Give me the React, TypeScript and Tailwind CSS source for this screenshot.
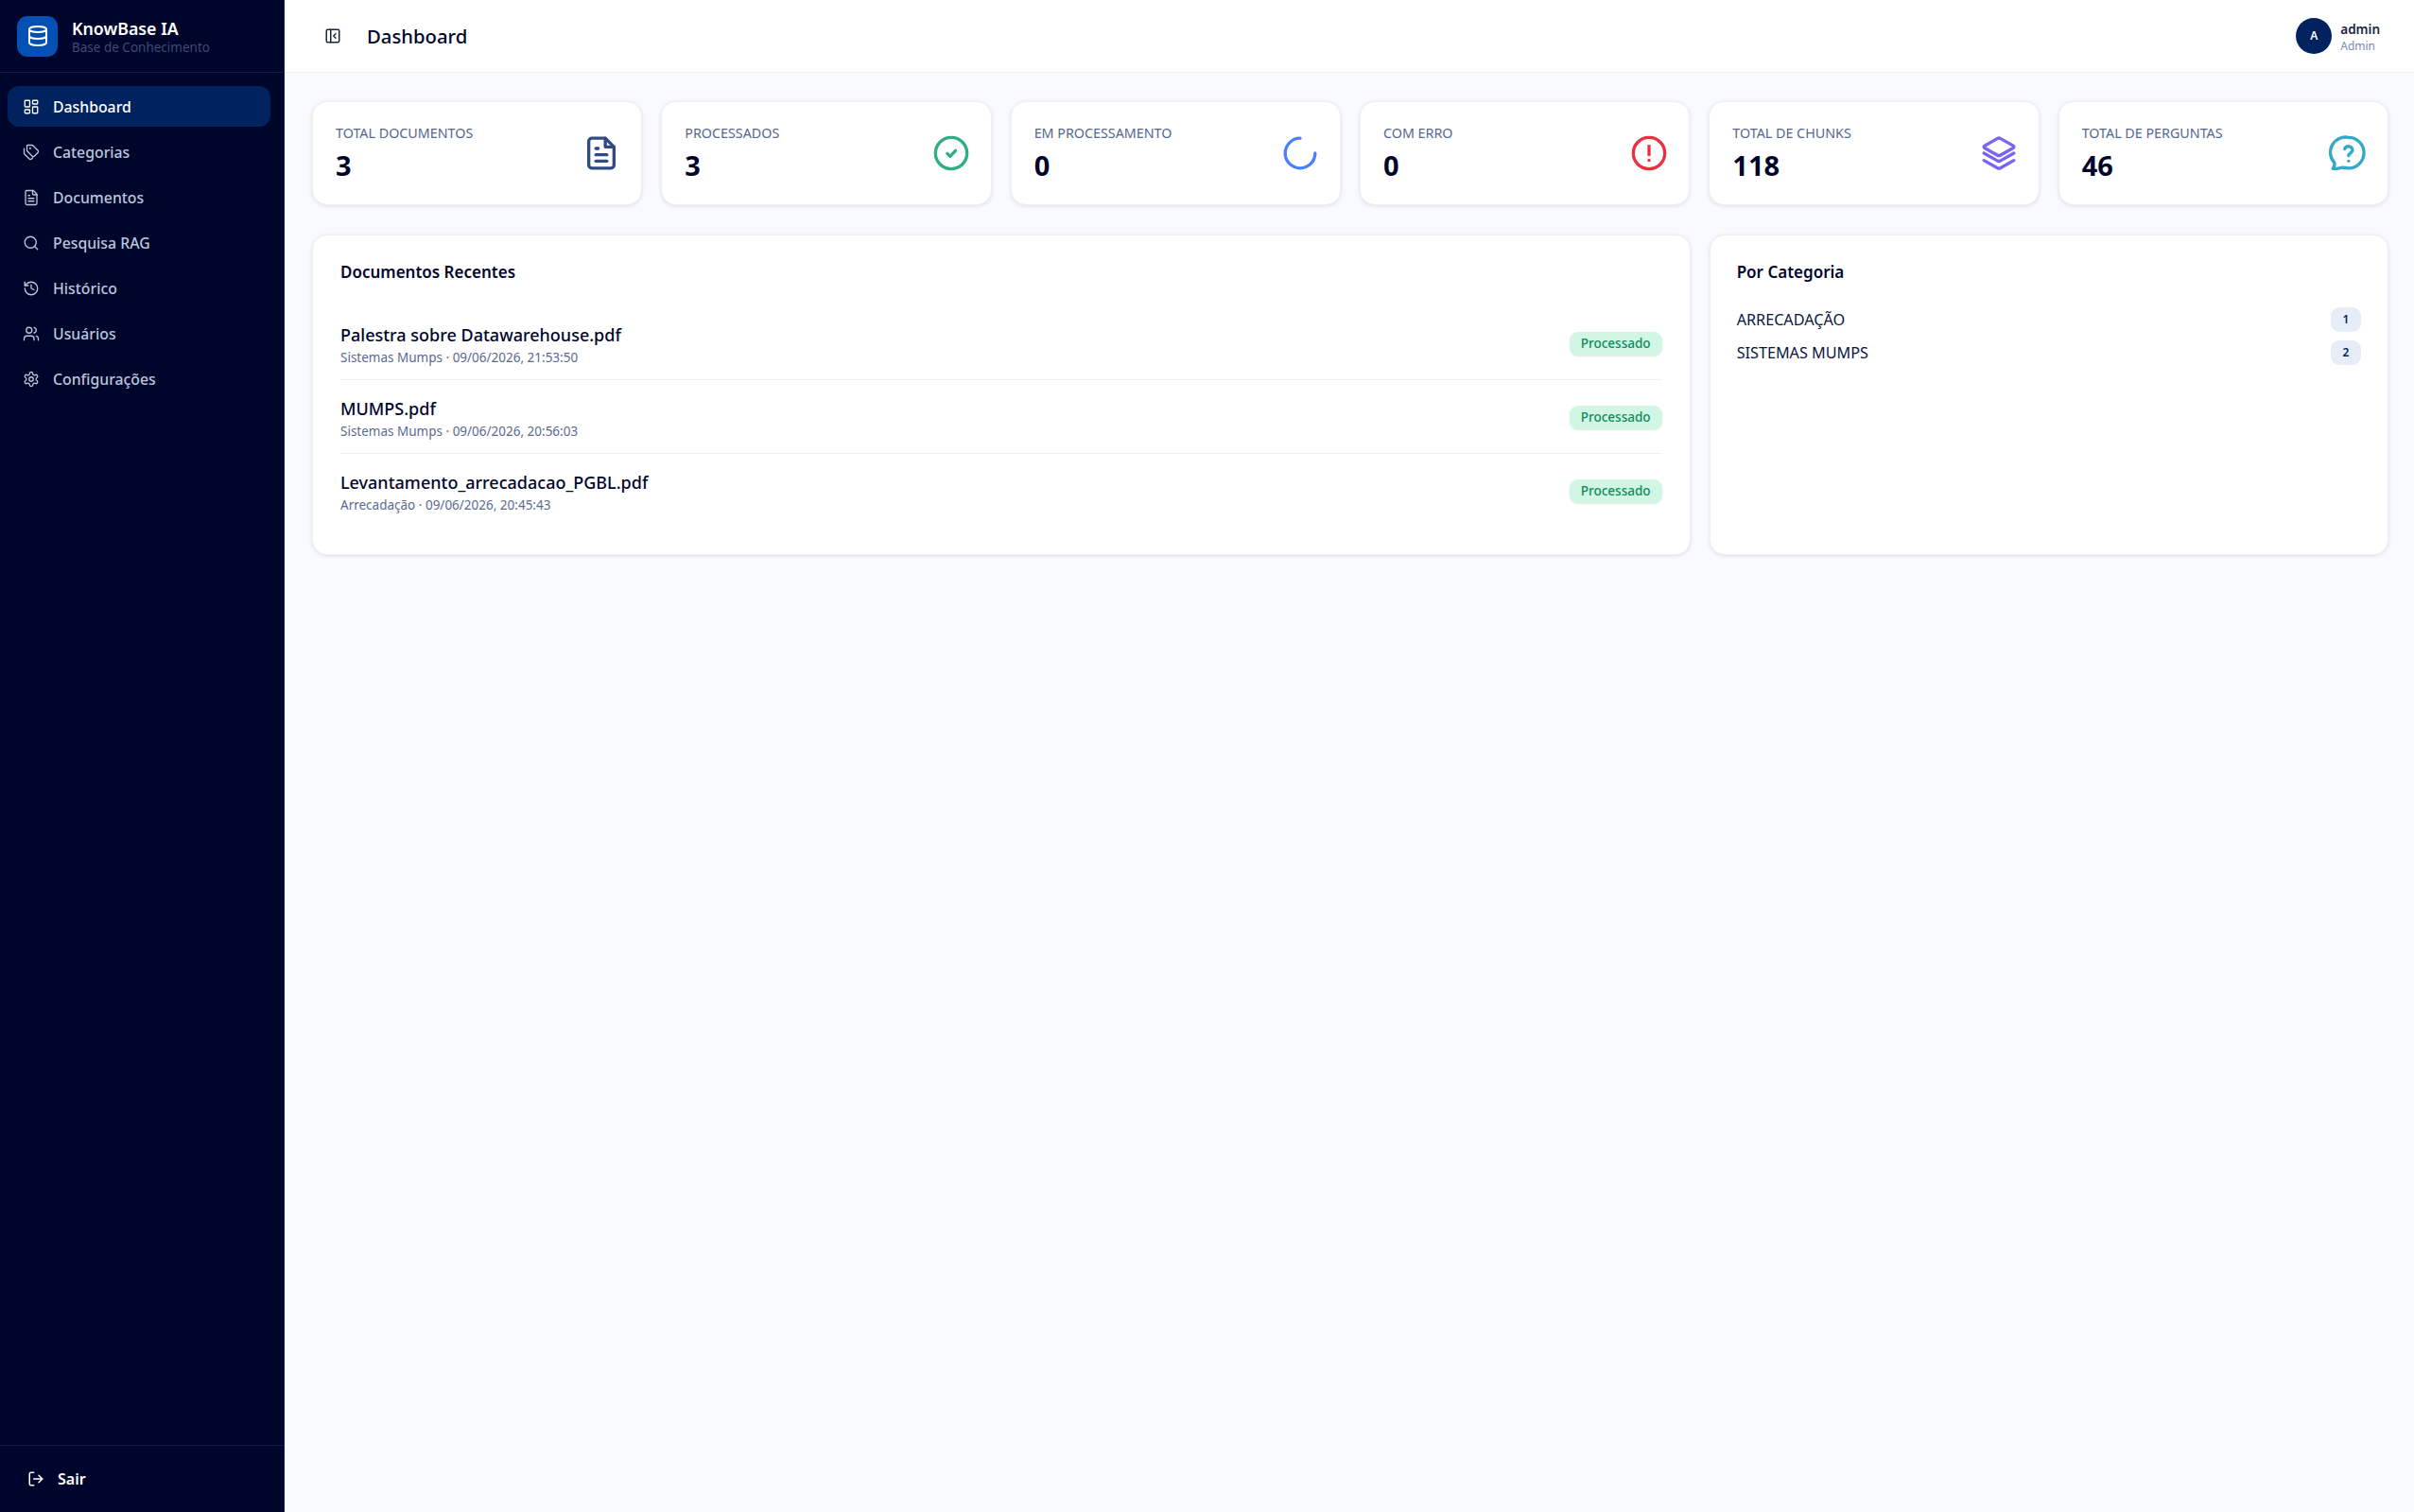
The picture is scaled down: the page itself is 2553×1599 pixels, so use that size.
import React from "react";

const font = "font-['Noto_Sans',sans-serif]";

function Icon({ className, sw = 2, children }: { className?: string; sw?: number; children: React.ReactNode }) {
  return (
    <svg viewBox="0 0 24 24" fill="none" stroke="currentColor" strokeWidth={sw} strokeLinecap="round" strokeLinejoin="round" className={className}>
      {children}
    </svg>
  );
}

const navItems: { label: string; active?: boolean; icon: React.ReactNode }[] = [
  {
    label: "Dashboard",
    active: true,
    icon: (
      <>
        <rect x="3" y="3" width="7" height="9" rx="1" />
        <rect x="14" y="3" width="7" height="5" rx="1" />
        <rect x="14" y="12" width="7" height="9" rx="1" />
        <rect x="3" y="16" width="7" height="5" rx="1" />
      </>
    ),
  },
  {
    label: "Categorias",
    icon: (
      <>
        <path d="M13.172 2a2 2 0 0 1 1.414.586l6.71 6.71a2.4 2.4 0 0 1 0 3.408l-4.592 4.592a2.4 2.4 0 0 1-3.408 0l-6.71-6.71A2 2 0 0 1 6 9.172V3a1 1 0 0 1 1-1z" />
        <path d="M2 7v6.172a2 2 0 0 0 .586 1.414l6.71 6.71a2.4 2.4 0 0 0 3.408 0l1.592-1.592" />
        <circle cx="10.5" cy="6.5" r=".5" fill="currentColor" />
      </>
    ),
  },
  {
    label: "Documentos",
    icon: (
      <>
        <path d="M15 2H6a2 2 0 0 0-2 2v16a2 2 0 0 0 2 2h12a2 2 0 0 0 2-2V7z" />
        <path d="M14 2v5a1 1 0 0 0 1 1h5" />
        <path d="M10 9H8" />
        <path d="M16 13H8" />
        <path d="M16 17H8" />
      </>
    ),
  },
  {
    label: "Pesquisa RAG",
    icon: (
      <>
        <circle cx="11" cy="11" r="8" />
        <path d="m21 21-4.3-4.3" />
      </>
    ),
  },
  {
    label: "Histórico",
    icon: (
      <>
        <path d="M3 12a9 9 0 1 0 9-9 9.75 9.75 0 0 0-6.74 2.74L3 8" />
        <path d="M3 3v5h5" />
        <path d="M12 7v5l4 2" />
      </>
    ),
  },
  {
    label: "Usuários",
    icon: (
      <>
        <path d="M16 21v-2a4 4 0 0 0-4-4H6a4 4 0 0 0-4 4v2" />
        <circle cx="9" cy="7" r="4" />
        <path d="M22 21v-2a4 4 0 0 0-3-3.87" />
        <path d="M16 3.13a4 4 0 0 1 0 7.75" />
      </>
    ),
  },
  {
    label: "Configurações",
    icon: (
      <>
        <path d="M12.22 2h-.44a2 2 0 0 0-2 2v.18a2 2 0 0 1-1 1.73l-.43.25a2 2 0 0 1-2 0l-.15-.08a2 2 0 0 0-2.73.73l-.22.38a2 2 0 0 0 .73 2.73l.15.1a2 2 0 0 1 1 1.72v.51a2 2 0 0 1-1 1.74l-.15.09a2 2 0 0 0-.73 2.73l.22.38a2 2 0 0 0 2.73.73l.15-.08a2 2 0 0 1 2 0l.43.25a2 2 0 0 1 1 1.73V20a2 2 0 0 0 2 2h.44a2 2 0 0 0 2-2v-.18a2 2 0 0 1 1-1.73l.43-.25a2 2 0 0 1 2 0l.15.08a2 2 0 0 0 2.73-.73l.22-.39a2 2 0 0 0-.73-2.73l-.15-.08a2 2 0 0 1-1-1.74v-.5a2 2 0 0 1 1-1.74l.15-.09a2 2 0 0 0 .73-2.73l-.22-.38a2 2 0 0 0-2.73-.73l-.15.08a2 2 0 0 1-2 0l-.43-.25a2 2 0 0 1-1-1.73V4a2 2 0 0 0-2-2z" />
        <circle cx="12" cy="12" r="3" />
      </>
    ),
  },
];

const stats: { label: string; value: string; color: string; icon: React.ReactNode }[] = [
  {
    label: "Total Documentos",
    value: "3",
    color: "text-[#2f4a85]",
    icon: (
      <>
        <path d="M14.500 2.500H6a2 2 0 0 0-2 2v15a2 2 0 0 0 2 2h12a2 2 0 0 0 2-2V8z" />
        <path d="M14.500 2.500V8H20" />
        <path d="M8.500 9H10" />
        <path d="M8.500 13h7" />
        <path d="M8.500 17h7" />
      </>
    ),
  },
  {
    label: "Processados",
    value: "3",
    color: "text-[#2fae82]",
    icon: (
      <>
        <circle cx="12" cy="12" r="10" />
        <path d="m9.500 12.200 1.800 1.800 3.400-3.600" />
      </>
    ),
  },
  {
    label: "Em Processamento",
    value: "0",
    color: "text-[#4a80ff]",
    icon: <path d="M12 2.500a9.500 9.500 0 1 0 9.500 9.500" />,
  },
  {
    label: "Com Erro",
    value: "0",
    color: "text-[#e8323f]",
    icon: (
      <>
        <circle cx="12" cy="12" r="10" />
        <path d="M12 7.500v5.500" />
        <path d="M12 16.500h.01" />
      </>
    ),
  },
  {
    label: "Total de Chunks",
    value: "118",
    color: "text-[#7a63f5]",
    icon: (
      <>
        <path d="M10.900 2.800a2 2 0 0 1 2.200 0l8 4.500a.8.8 0 0 1 0 1.400l-8 4.500a2 2 0 0 1-2.200 0l-8-4.500a.8.8 0 0 1 0-1.400z" />
        <path d="m2.500 12 8.400 4.700a2 2 0 0 0 2.200 0l8.400-4.700" />
        <path d="m2.500 16.600 8.400 4.700a2 2 0 0 0 2.200 0l8.400-4.700" />
      </>
    ),
  },
  {
    label: "Total de Perguntas",
    value: "46",
    color: "text-[#33a9c9]",
    icon: (
      <>
        <path d="M12.500 2a9.500 9.500 0 0 1 0 19.500c-1.700 0-3-.6-4.700-.3-1.700.3-3.400.9-5.300.6.800-1 1.300-2.200 1.100-3.600A9.700 9.700 0 0 1 12.500 2z" />
        <path d="M10 9.300a2.600 2.600 0 0 1 5 .8c0 1.700-2.500 2-2.500 3.500" />
        <path d="M12.500 17h.01" />
      </>
    ),
  },
];

const docs = [
  { name: "Palestra sobre Datawarehouse.pdf", meta: "Sistemas Mumps · 09/06/2026, 21:53:50" },
  { name: "MUMPS.pdf", meta: "Sistemas Mumps · 09/06/2026, 20:56:03" },
  { name: "Levantamento_arrecadacao_PGBL.pdf", meta: "Arrecadação · 09/06/2026, 20:45:43" },
];

const categories = [
  { name: "ARRECADAÇÃO", count: 1 },
  { name: "SISTEMAS MUMPS", count: 2 },
];

export default function App() {
  return (
    <div className={`flex h-[1599px] w-full overflow-hidden bg-[#f9faff] ${font}`}>
      {/* Sidebar */}
      <aside className="flex w-[301px] shrink-0 flex-col border-r border-[#10204a] bg-[#00052b]">
        <div className="flex h-[77px] items-center gap-[15px] border-b border-[#0f1c45] pl-[18px]">
          <div className="flex h-[43px] w-[43px] items-center justify-center rounded-[11px] bg-[#0550b4] text-white">
            <Icon className="h-[24px] w-[24px]">
              <ellipse cx="12" cy="5" rx="9" ry="3" />
              <path d="M3 5v14a9 3 0 0 0 18 0V5" />
              <path d="M3 12a9 3 0 0 0 18 0" />
            </Icon>
          </div>
          <div className="pt-[2px]">
            <div className="text-[17.800px] leading-[22px] font-semibold text-white">KnowBase IA</div>
            <div className="text-[13.500px] leading-[18px] text-[#3d4b75]">Base de Conhecimento</div>
          </div>
        </div>
        <nav className="flex flex-1 flex-col gap-[5px] pt-[14px] pr-[14px] pl-[8px]">
          {navItems.map((item) => (
            <div
              key={item.label}
              className={`flex h-[43px] items-center gap-[14px] rounded-[12px] pl-[16px] text-[15.800px] font-medium ${
                item.active ? "bg-[#00235f] text-white" : "text-[#bcc6dc]"
              }`}
            >
              <Icon className="h-[18px] w-[18px]" sw={1.75}>
                {item.icon}
              </Icon>
              <span className="pt-[2px]">{item.label}</span>
            </div>
          ))}
        </nav>
        <div className="flex h-[71px] items-center gap-[14px] border-t border-[#0f1c45] pl-[29px] text-[16px] font-semibold text-white">
          <Icon className="h-[18px] w-[18px]">
            <path d="M9 3H5a2 2 0 0 0-2 2v14a2 2 0 0 0 2 2h4" />
            <path d="M21 12H9" />
            <path d="m16 7 5 5-5 5" />
          </Icon>
          Sair
        </div>
      </aside>

      {/* Main */}
      <div className="flex min-w-0 flex-1 flex-col">
        <header className="flex h-[77px] items-center border-b border-[#f0f2fa] bg-white pr-[36px] pl-[42px]">
          <Icon className="h-[18px] w-[18px] text-[#1a2540]">
            <rect x="3" y="3" width="18" height="18" rx="2" />
            <path d="M9 3v18" />
            <path d="m16 15-3-3 3-3" />
          </Icon>
          <h1 className="ml-[27px] text-[20.300px] font-medium text-[#00052b]">Dashboard</h1>
          <div className="ml-auto flex items-center gap-[9px]">
            <div className="flex h-[38px] w-[38px] items-center justify-center rounded-full bg-[#00235f] text-[12px] font-semibold text-white">
              A
            </div>
            <div className="pt-[3px]">
              <div className="text-[13.500px] leading-[17px] font-semibold text-[#1a2540]">admin</div>
              <div className="text-[12px] leading-[17px] text-[#7a8bb0]">Admin</div>
            </div>
          </div>
        </header>

        <main className="flex flex-col gap-[31px] pt-[30px] pr-[27px] pl-[29px]">
          <div className="grid grid-cols-6 gap-[20px]">
            {stats.map((s) => (
              <div
                key={s.label}
                className="flex h-[110px] items-center justify-between rounded-[16px] border border-[#eef0f6] bg-white pr-[22px] pl-[24px] shadow-[0_1px_4px_rgba(20,30,70,0.12)]"
              >
                <div className="pt-[2px]">
                  <div className="text-[14.300px] leading-[18px] text-[#56678c] uppercase">{s.label}</div>
                  <div className="mt-[6px] text-[29px] leading-[38px] font-bold text-[#00052b]">{s.value}</div>
                </div>
                <Icon className={`h-[40px] w-[40px] ${s.color}`} sw={2}>
                  {s.icon}
                </Icon>
              </div>
            ))}
          </div>

          <div className="grid grid-cols-[1457fr_718fr] gap-[20px]">
            <section className="h-[339px] rounded-[16px] border border-[#eef0f6] bg-white px-[29px] pt-[27px] shadow-[0_1px_4px_rgba(20,30,70,0.12)]">
              <h2 className="text-[17px] leading-[24px] font-semibold text-[#00052b]">Documentos Recentes</h2>
              <div className="mt-[24px] flex flex-col">
                {docs.map((d, i) => (
                  <div
                    key={d.name}
                    className={`flex h-[78px] items-center justify-between border-b ${i < docs.length - 1 ? "border-[#eef0f6]" : "border-transparent"}`}
                  >
                    <div className="pt-[3px]">
                      <div className="text-[18px] leading-[24px] font-medium text-[#00052b]">{d.name}</div>
                      <div className="mt-[3px] text-[13.500px] leading-[18px] text-[#5a6a90]">{d.meta}</div>
                    </div>
                    <span className="mt-[2px] flex h-[25px] w-[98px] items-center justify-center rounded-[9px] bg-[#d1f7e4] text-[13.500px] font-medium text-[#0e8a5f] shadow-[0_1px_2px_rgba(20,30,70,0.12)]">
                      Processado
                    </span>
                  </div>
                ))}
              </div>
            </section>

            <section className="h-[339px] rounded-[16px] border border-[#eef0f6] bg-white pt-[27px] pr-[28px] pl-[28px] shadow-[0_1px_4px_rgba(20,30,70,0.12)]">
              <h2 className="text-[17px] leading-[24px] font-semibold text-[#00052b]">Por Categoria</h2>
              <div className="mt-[25px] flex flex-col gap-[9px]">
                {categories.map((c) => (
                  <div key={c.name} className="flex h-[26px] items-center justify-between text-[16.200px] text-[#0a1640]">
                    {c.name}
                    <span className="flex h-[26px] w-[32px] items-center justify-center rounded-[9px] bg-[#e6ecf8] text-[12px] font-semibold text-[#00235f]">
                      {c.count}
                    </span>
                  </div>
                ))}
              </div>
            </section>
          </div>
        </main>
      </div>
    </div>
  );
}
